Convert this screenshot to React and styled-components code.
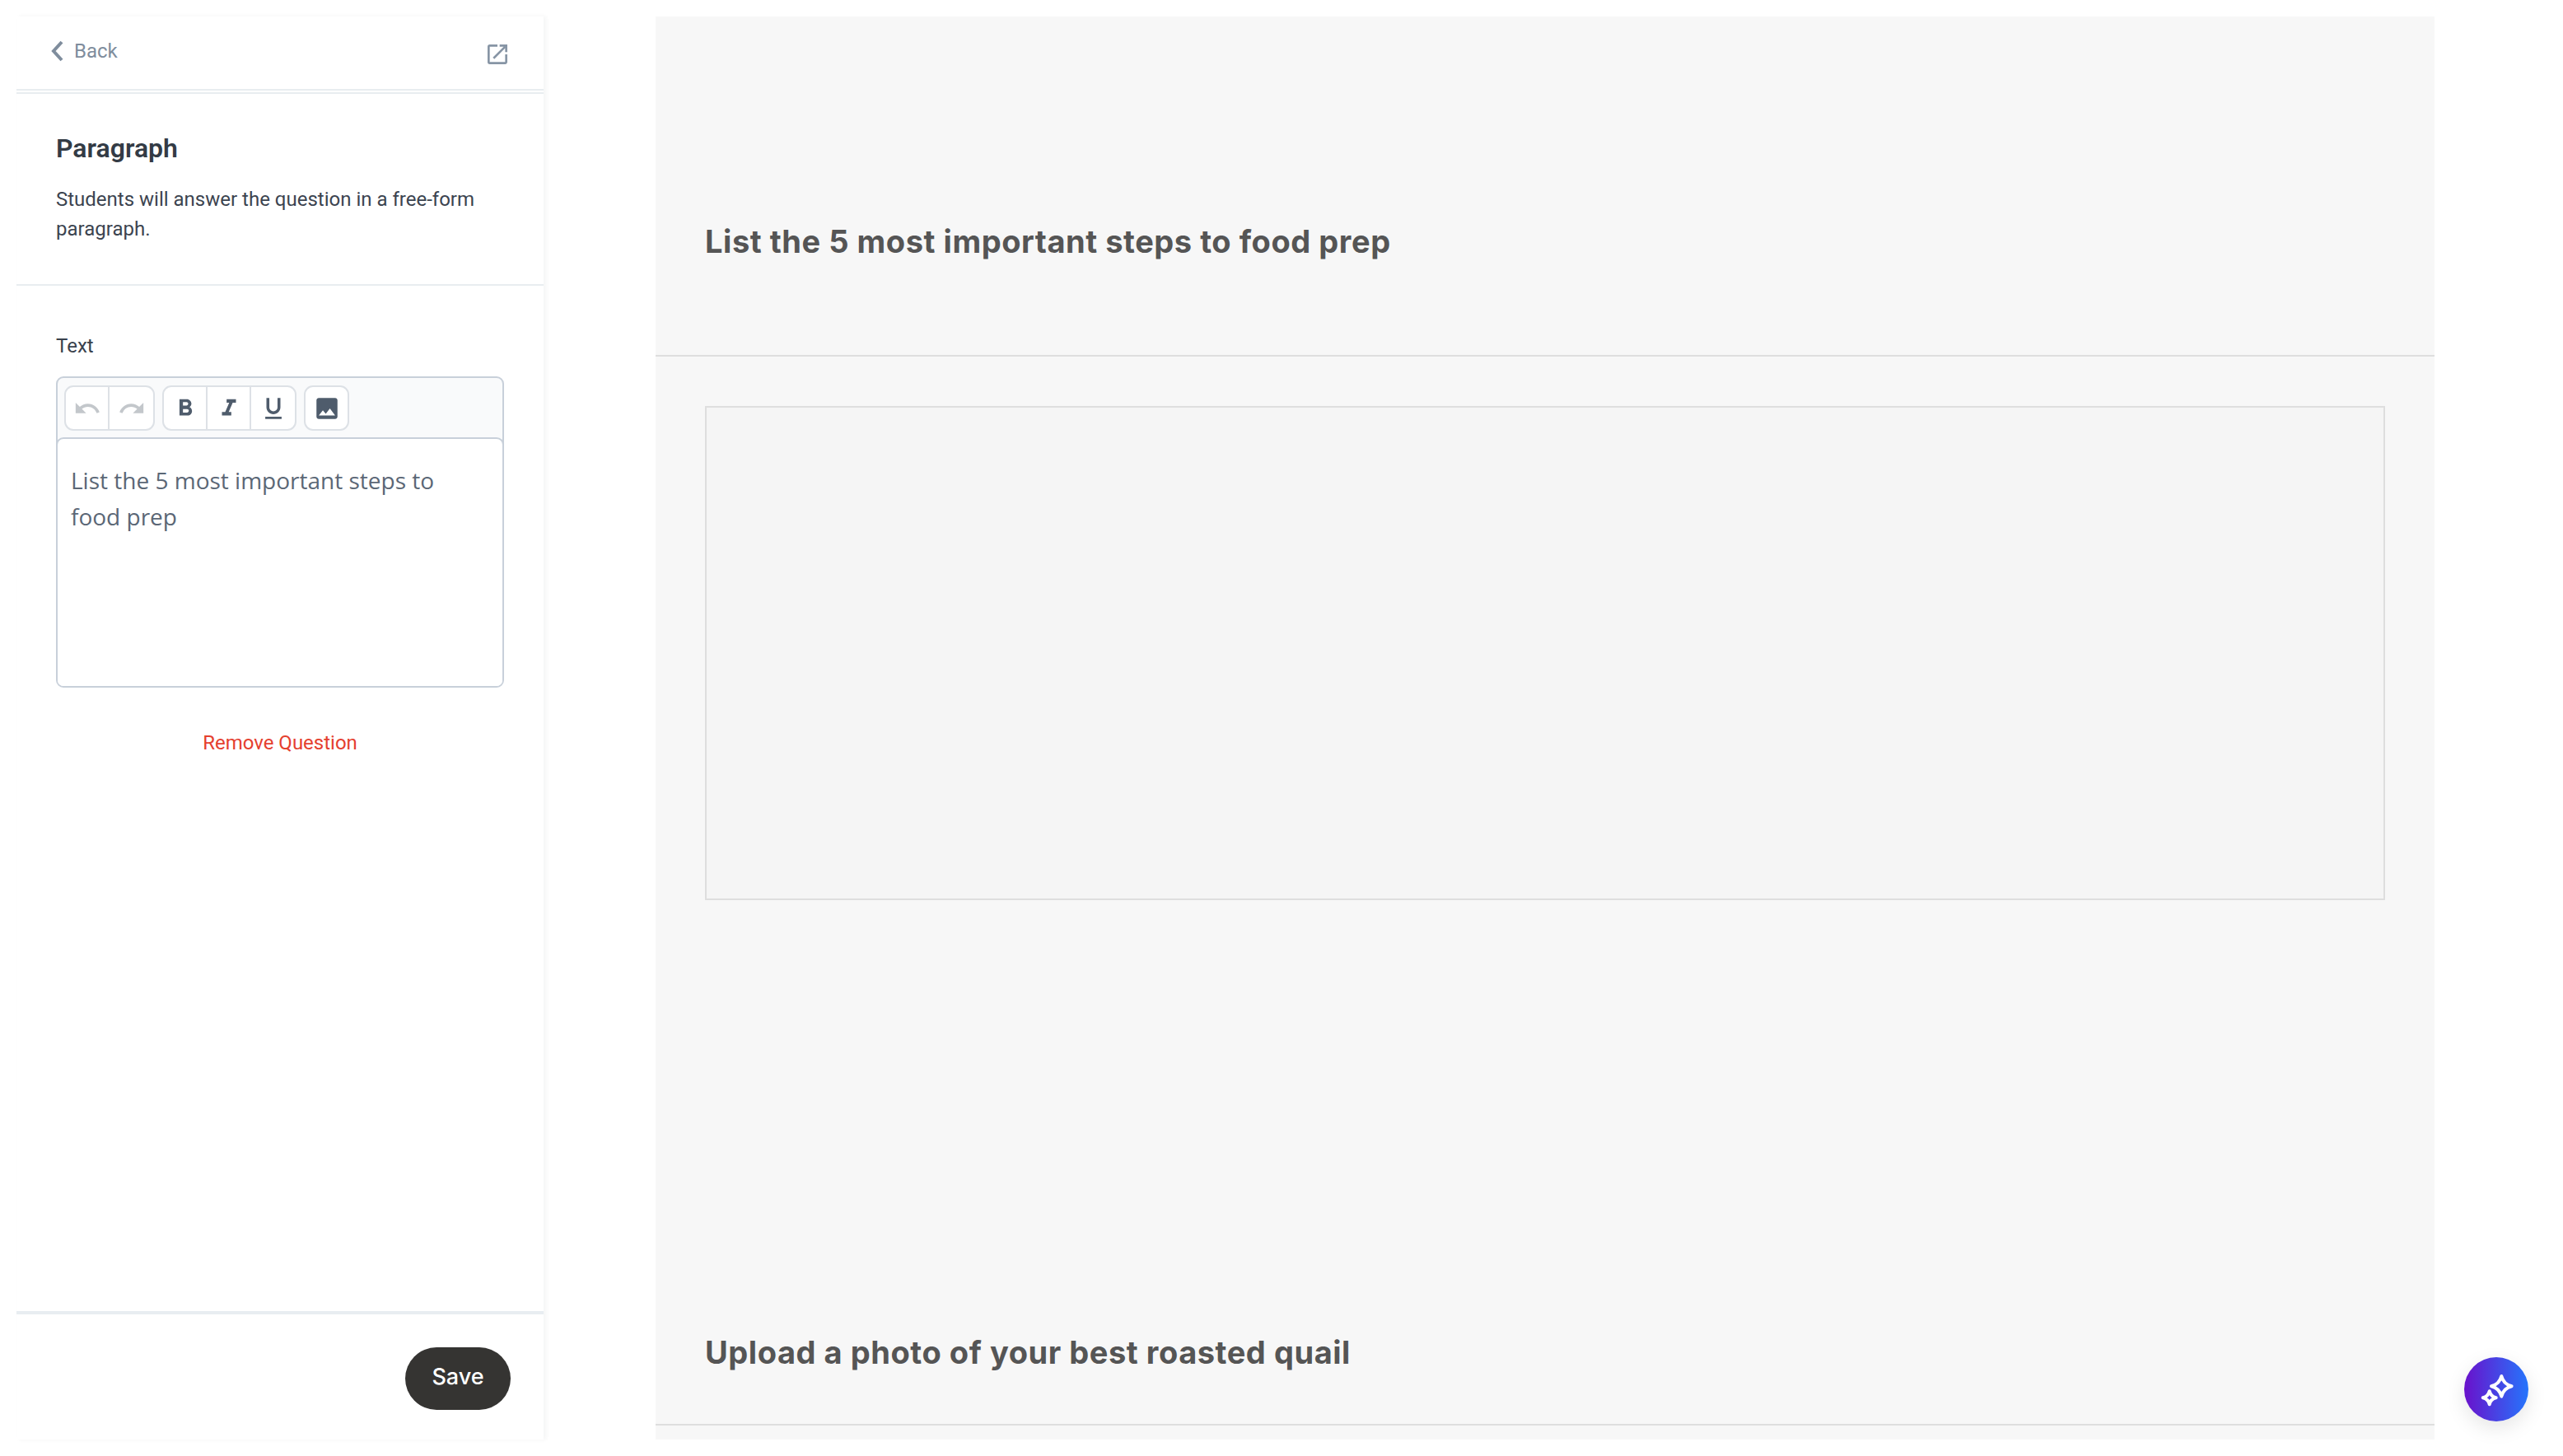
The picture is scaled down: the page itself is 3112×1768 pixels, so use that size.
import React from "react";
import styled, { createGlobalStyle } from "styled-components";
import {
	MdUndo,
	MdRedo,
	MdFormatBold,
	MdFormatItalic,
	MdFormatUnderlined,
	MdImage,
	MdOpenInNew,
} from "react-icons/md";

const GlobalStyle = createGlobalStyle`
	html, body {
		margin: 0;
		background: #fff;
	}
	* {
		box-sizing: border-box;
	}
`;

const Page = styled.div`
	display: flex;
	width: 3112px;
	height: 1768px;
	padding: 20px 156px 20px 20px;
	gap: 136px;
	font-family: Roboto, "Liberation Sans", sans-serif;
	overflow: hidden;
`;

const Sidebar = styled.aside`
	display: flex;
	flex-direction: column;
	width: 640px;
	background: #fff;
	box-shadow: 3px 0 5px rgba(40, 50, 60, 0.05);
`;

const TopBar = styled.div`
	display: flex;
	justify-content: space-between;
	height: 94px;
	padding: 31px 40px 0 40px;
	border-bottom: 6px double #e8edf0;
`;

const BackLink = styled.a`
	display: flex;
	align-items: center;
	gap: 8px;
	height: 22px;
	color: #7f8d9d;
	font-size: 24px;
	line-height: 22px;
`;

const ExternalIcon = styled(MdOpenInNew)`
	width: 32px;
	height: 32px;
	margin-top: -1px;
	color: #8795a5;
`;

const Intro = styled.div`
	height: 233px;
	padding: 46px 48px 0;
	border-bottom: 2px solid #e8edf0;
`;

const Title = styled.h2`
	margin: 0 0 24px;
	color: #333b45;
	font-size: 32px;
	font-weight: 600;
	line-height: 40px;
`;

const Description = styled.p`
	margin: 0;
	color: #3c4450;
	font-size: 24px;
	line-height: 36px;
`;

const Field = styled.div`
	flex: 1;
	padding: 58px 48px 0;
`;

const Label = styled.div`
	margin-bottom: 22px;
	color: #39414c;
	font-size: 24px;
	line-height: 30px;
`;

const Editor = styled.div`
	height: 378px;
	background: #f9fafb;
	border: 2px solid #c8d0da;
	border-radius: 9px;
	overflow: hidden;
`;

const Toolbar = styled.div`
	display: flex;
	gap: 9px;
	height: 72px;
	padding: 9px 8px 0;
`;

const ButtonGroup = styled.div`
	display: flex;
	height: 55px;
	background: #fff;
	border: 2px solid #dde1e6;
	border-radius: 11px;
	overflow: hidden;
`;

const ToolButton = styled.button`
	display: flex;
	align-items: center;
	justify-content: center;
	width: ${(p) => p.$width || 53}px;
	padding: 0;
	background: none;
	border: 0;
	border-right: 2px solid #dde1e6;
	color: ${(p) => (p.$disabled ? "#c3c7cb" : "#4f5c6c")};
	font-size: 34px;

	&:last-child {
		border-right: 0;
	}
`;

const EditorBody = styled.div`
	height: 304px;
	margin: 0 -2px;
	padding: 28px 16px;
	background: #fff;
	border: 2px solid #c8d0da;
	border-bottom: 0;
	border-radius: 9px 9px 0 0;
	color: #5b6776;
	font-family: "Open Sans", "Noto Sans", sans-serif;
	font-size: 28px;
	line-height: 44px;
`;

const RemoveLink = styled.a`
	display: block;
	margin-top: 52px;
	color: #e5402f;
	font-size: 24px;
	line-height: 30px;
	text-align: center;
`;

const Footer = styled.div`
	display: flex;
	justify-content: flex-end;
	height: 156px;
	padding: 40px 40px 0;
	border-top: 4px solid #e8edf1;
`;

const SaveButton = styled.button`
	width: 128px;
	height: 76px;
	padding: 0 0 6px;
	background: #353432;
	border: 0;
	border-radius: 38px;
	color: #fff;
	font-family: Inter, Roboto, sans-serif;
	font-size: 27px;
	font-weight: 500;
`;

const Main = styled.main`
	display: flex;
	flex-direction: column;
	width: 2160px;
	background: #f7f7f7;
	overflow: hidden;
`;

const QuestionHeader = styled.div`
	display: flex;
	flex-shrink: 0;
	align-items: flex-end;
	height: ${(p) => p.$height}px;
	padding: 0 60px ${(p) => p.$bottom}px;
	border-bottom: 2px solid #dedede;
`;

const QuestionTitle = styled.h3`
	margin: 0;
	color: #555;
	font-family: Inter, "Open Sans", sans-serif;
	font-size: 38px;
	font-weight: 700;
	letter-spacing: 0.55px;
	line-height: 48px;
`;

const AnswerArea = styled.div`
	flex-shrink: 0;
	height: 1185px;
	padding: 60px 60px 0;
`;

const AnswerBox = styled.div`
	height: 600px;
	background: #f5f5f5;
	border: 2px solid #dedede;
`;

const AssistantButton = styled.button`
	position: fixed;
	left: 2992px;
	top: 1648px;
	display: flex;
	width: 78px;
	height: 78px;
	padding: 0;
	background: linear-gradient(90deg, #6a11cb, #2575fc);
	border: 0;
	border-radius: 50%;
	box-shadow: 0 8px 24px rgba(0, 0, 0, 0.1);
`;

const Chevron = () => (
	<svg width="22" height="26" viewBox="0 0 22 26" fill="none">
		<path d="M15 2 5 13l10 11" stroke="currentColor" strokeWidth="4" />
	</svg>
);

const Sparkles = () => (
	<svg width="78" height="78" viewBox="0 0 78 78" fill="none">
		<g stroke="#fff" strokeWidth="4" strokeLinejoin="round">
			<path d="M45.300 23q2.500 9.800 12.300 12.300q-9.800 2.500-12.300 12.300q-2.500-9.800-12.300-12.300q9.800-2.500 12.300-12.300z" />
			<path d="M30.700 41.300q1.500 6.500 8 8q-6.500 1.500-8 8q-1.500-6.500-8-8q6.500-1.500 8-8z" />
		</g>
	</svg>
);

export default function App() {
	return (
		<Page>
			<GlobalStyle />
			<Sidebar>
				<TopBar>
					<BackLink>
						<Chevron />
						Back
					</BackLink>
					<ExternalIcon />
				</TopBar>
				<Intro>
					<Title>Paragraph</Title>
					<Description>
						Students will answer the question in a free-form paragraph.
					</Description>
				</Intro>
				<Field>
					<Label>Text</Label>
					<Editor>
						<Toolbar>
							<ButtonGroup>
								<ToolButton $disabled>
									<MdUndo />
								</ToolButton>
								<ToolButton $disabled>
									<MdRedo />
								</ToolButton>
							</ButtonGroup>
							<ButtonGroup>
								<ToolButton>
									<MdFormatBold />
								</ToolButton>
								<ToolButton>
									<MdFormatItalic />
								</ToolButton>
								<ToolButton>
									<MdFormatUnderlined />
								</ToolButton>
							</ButtonGroup>
							<ButtonGroup>
								<ToolButton $width={51}>
									<MdImage />
								</ToolButton>
							</ButtonGroup>
						</Toolbar>
						<EditorBody>List the 5 most important steps to food prep</EditorBody>
					</Editor>
					<RemoveLink>Remove Question</RemoveLink>
				</Field>
				<Footer>
					<SaveButton>Save</SaveButton>
				</Footer>
			</Sidebar>
			<Main>
				<QuestionHeader $height={413} $bottom={114}>
					<QuestionTitle>List the 5 most important steps to food prep</QuestionTitle>
				</QuestionHeader>
				<AnswerArea>
					<AnswerBox />
				</AnswerArea>
				<QuestionHeader $height={113} $bottom={63}>
					<QuestionTitle>Upload a photo of your best roasted quail</QuestionTitle>
				</QuestionHeader>
			</Main>
			<AssistantButton>
				<Sparkles />
			</AssistantButton>
		</Page>
	);
}
